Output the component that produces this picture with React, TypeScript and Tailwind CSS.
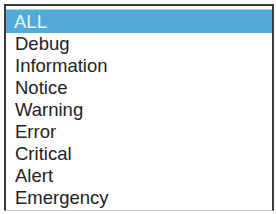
const levels = ["ALL", "Debug", "Information", "Notice", "Warning", "Error", "Critical", "Alert", "Emergency"];

export default function App() {
  return (
    <div className="h-[214px] w-[276px] bg-white p-1">
      <div className="h-[207px] w-[270px] border-2 border-b border-[#3a3a3a] border-b-[#c8c8c8] bg-white pt-[3px] font-['Liberation_Sans',Arial,sans-serif] text-[18.5px] leading-[22px] text-[#222]">
        {levels.map((level, i) => (
          <div
            key={level}
            className={
              i === 0
                ? "h-[24px] border-t border-[#9fd3ee] bg-[#52aad9] pl-2 leading-[23px] text-[#eaf6fc]"
                : "h-[22px] pl-[9px]"
            }
          >
            {level}
          </div>
        ))}
      </div>
    </div>
  );
}
